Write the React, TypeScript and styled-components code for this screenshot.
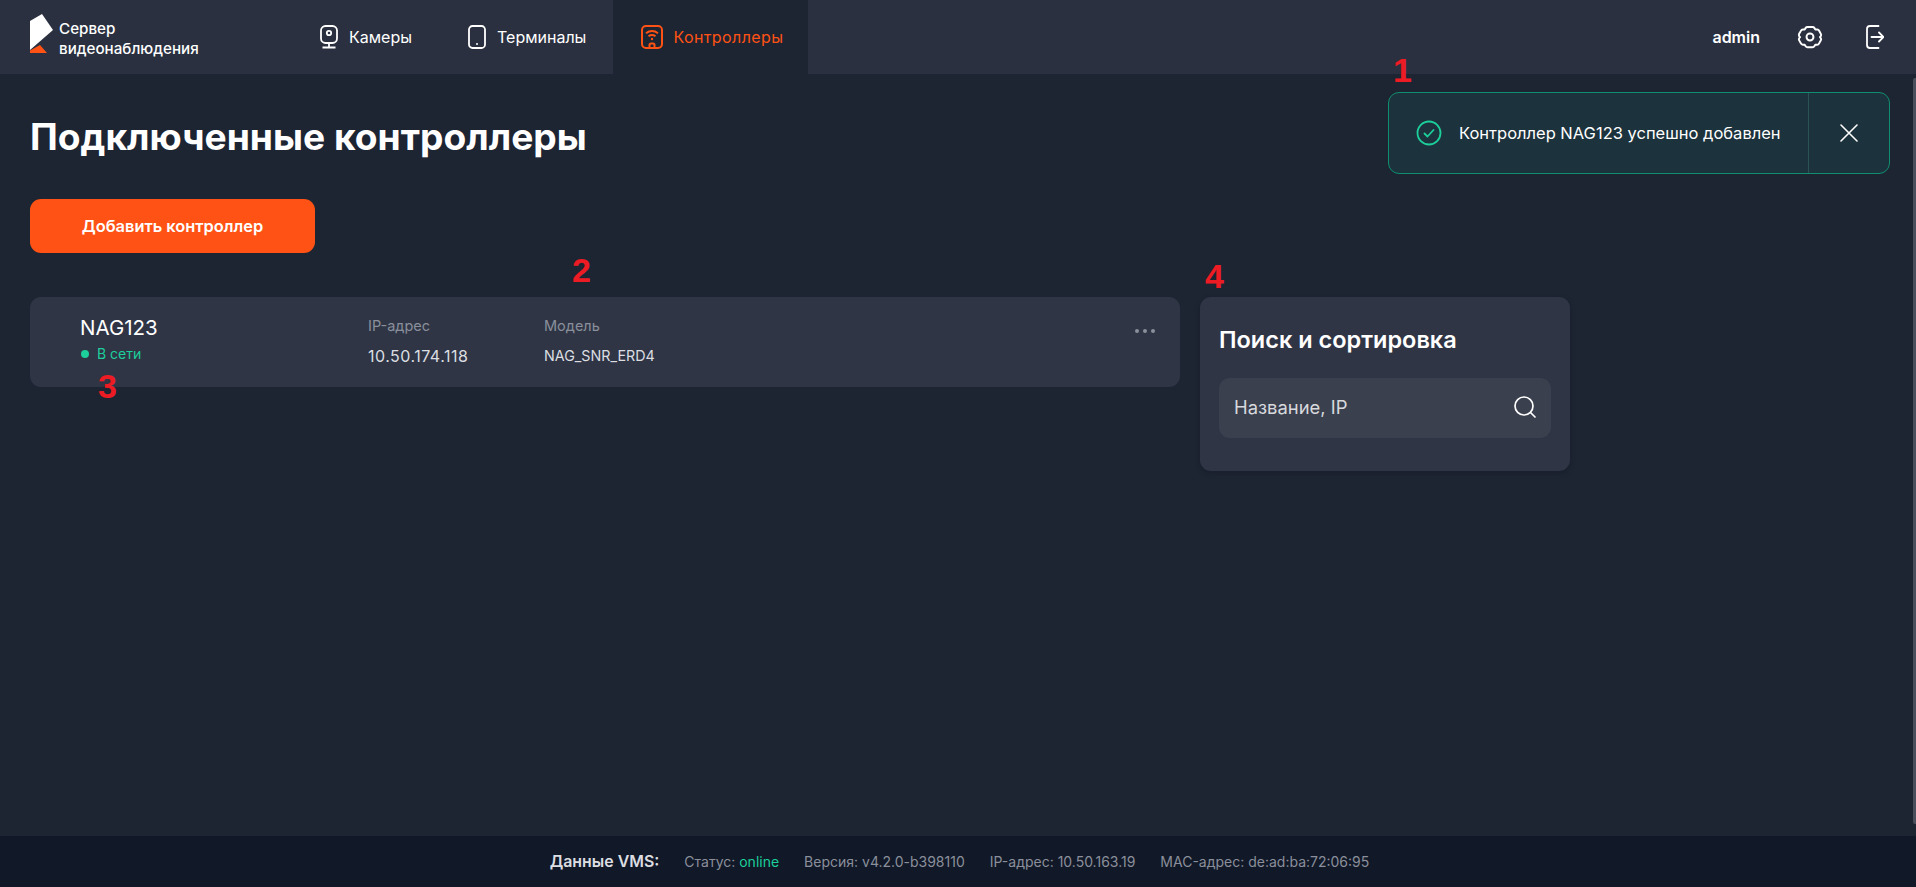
import React from 'react';
import styled, { createGlobalStyle } from 'styled-components';

const ORANGE = '#ff5214';
const GREEN = '#1ccf9b';
const PAGE_BG = '#1d2432';

const GlobalStyle = createGlobalStyle`
    * {
        box-sizing: border-box;
    }
    html,
    body {
        margin: 0;
        padding: 0;
        height: 100%;
        overflow: hidden;
        background: ${PAGE_BG};
        font-family: Inter, 'Noto Sans', sans-serif;
    }
`;

const NAV_ITEMS = [
    { label: 'Камеры', icon: <CameraIcon />, active: false },
    { label: 'Терминалы', icon: <TerminalIcon />, active: false },
    { label: 'Контроллеры', icon: <ControllerIcon />, active: true },
];

function CameraIcon() {
    return (
        <svg width="22" height="26" viewBox="0 0 22 26" fill="none" stroke="currentColor" strokeWidth="1.8">
            <rect x="3" y="2" width="16" height="17" rx="4.5" />
            <circle cx="11" cy="9" r="2.2" />
            <path d="M11 19v4M4.5 23.5h13" />
        </svg>
    );
}

function TerminalIcon() {
    return (
        <svg width="22" height="26" viewBox="0 0 22 26" fill="none" stroke="currentColor" strokeWidth="1.8">
            <rect x="3" y="2" width="16" height="22" rx="3.5" />
            <circle cx="11" cy="20" r="1" fill="currentColor" stroke="none" />
        </svg>
    );
}

function ControllerIcon() {
    return (
        <svg width="24" height="26" viewBox="0 0 24 26" fill="none" stroke="currentColor" strokeWidth="2">
            <rect x="2" y="2" width="20" height="22" rx="4" />
            <path d="M6 9.200c3.600-2.800 8.400-2.800 12 0M8.500 12.300c2.200-1.600 4.800-1.600 7 0" />
            <circle cx="12" cy="15" r="1.200" fill="currentColor" stroke="none" />
            <path d="M9.500 24v-3a1.500 1.500 0 0 1 1.500-1.500h2a1.500 1.500 0 0 1 1.500 1.500v3" />
        </svg>
    );
}

function GearIcon() {
    return (
        <svg width="26" height="26" viewBox="0 0 24 24" fill="none" stroke="currentColor" strokeWidth="1.8" strokeLinejoin="round">
            <circle cx="12" cy="12" r="3.2" />
            <path d="M14.3 2.700a2 2 0 0 1 1.700.9l.9 1.400 1.800.1a2 2 0 0 1 1.600 1l1.700 3a2 2 0 0 1 0 2l-.8 1 .8 1a2 2 0 0 1 0 2l-1.700 3a2 2 0 0 1-1.600 1l-1.800.1-.9 1.400a2 2 0 0 1-1.700.9H9.700a2 2 0 0 1-1.700-.9l-.9-1.400-1.800-.1a2 2 0 0 1-1.600-1l-1.700-3a2 2 0 0 1 0-2l.8-1-.8-1a2 2 0 0 1 0-2l1.700-3a2 2 0 0 1 1.600-1l1.800-.1.900-1.400a2 2 0 0 1 1.700-.9z" />
        </svg>
    );
}

function LogoutIcon() {
    return (
        <svg width="18" height="24" viewBox="0 0 18 24" fill="none" stroke="currentColor" strokeWidth="1.8" strokeLinecap="round" strokeLinejoin="round">
            <path d="M12.500 1H4a3 3 0 0 0-3 3v16a3 3 0 0 0 3 3h8.500" />
            <path d="M5.500 12H17M13 7.500l4.500 4.500-4.500 4.500" />
        </svg>
    );
}

function Logo() {
    return (
        <svg width="24" height="40" viewBox="0 0 24 40">
            <path d="M0 7 12 0l11 16L0 36z" fill="#ffffff" />
            <path d="M0 39v-2.500L10 31l7 8z" fill={ORANGE} />
        </svg>
    );
}

export default function App() {
    return (
        <S_Page>
            <GlobalStyle />
            <S_Header>
                <S_Brand>
                    <Logo />
                    <S_BrandName>
                        Сервер
                        <br />
                        видеонаблюдения
                    </S_BrandName>
                </S_Brand>
                <S_Nav>
                    {NAV_ITEMS.map((item) => (
                        <S_NavItem key={item.label} $active={item.active}>
                            {item.icon}
                            {item.label}
                        </S_NavItem>
                    ))}
                </S_Nav>
                <S_User>
                    <S_UserName>admin</S_UserName>
                    <S_IconButton>
                        <GearIcon />
                    </S_IconButton>
                    <S_IconButton>
                        <LogoutIcon />
                    </S_IconButton>
                </S_User>
            </S_Header>

            <S_Main>
                <S_Title>Подключенные контроллеры</S_Title>
                <S_AddButton>Добавить контроллер</S_AddButton>
                <S_Columns>
                    <S_ControllerCard>
                        <S_Mark $top={-45} $left={542}>
                            2
                        </S_Mark>
                        <S_Mark $top={71} $left={68}>
                            3
                        </S_Mark>
                        <S_NameCol>
                            <S_ControllerName>NAG123</S_ControllerName>
                            <S_Status>В сети</S_Status>
                        </S_NameCol>
                        <S_InfoCol $width={176}>
                            <S_InfoLabel>IP-адрес</S_InfoLabel>
                            <S_IpValue>10.50.174.118</S_IpValue>
                        </S_InfoCol>
                        <S_InfoCol $width={200}>
                            <S_InfoLabel>Модель</S_InfoLabel>
                            <S_InfoValue>NAG_SNR_ERD4</S_InfoValue>
                        </S_InfoCol>
                        <S_MoreDots>
                            <i />
                            <i />
                            <i />
                        </S_MoreDots>
                    </S_ControllerCard>
                    <S_SearchPanel>
                        <S_Mark $top={-39} $left={5}>
                            4
                        </S_Mark>
                        <S_SearchTitle>Поиск и сортировка</S_SearchTitle>
                        <S_SearchBox>
                            Название, IP
                            <svg width="24" height="24" viewBox="0 0 24 24" fill="none" stroke="#ffffff" strokeWidth="1.7" strokeLinecap="round">
                                <circle cx="11" cy="11" r="9" />
                                <path d="M17.500 17.500 22 22" />
                            </svg>
                        </S_SearchBox>
                    </S_SearchPanel>
                </S_Columns>
            </S_Main>

            <S_Footer>
                <S_FooterTitle>Данные VMS:</S_FooterTitle>
                <span>
                    Статус: <S_Online>online</S_Online>
                </span>
                <span>Версия: v4.2.0-b398110</span>
                <span>IP-адрес: 10.50.163.19</span>
                <span>MAC-адрес: de:ad:ba:72:06:95</span>
            </S_Footer>

            <S_Toast>
                <S_Mark $top={-41} $left={4}>
                    1
                </S_Mark>
                <S_ToastBody>
                    <svg width="26" height="26" viewBox="0 0 26 26" fill="none" stroke={GREEN} strokeWidth="1.8" strokeLinecap="round" strokeLinejoin="round">
                        <circle cx="13" cy="13" r="11.500" />
                        <path d="m8.500 13.500 3 3 6-6.500" />
                    </svg>
                    Контроллер NAG123 успешно добавлен
                </S_ToastBody>
                <S_ToastClose>
                    <svg width="20" height="20" viewBox="0 0 20 20" fill="none" stroke="#ffffff" strokeWidth="1.6" strokeLinecap="round">
                        <path d="m2 2 16 16M18 2 2 18" />
                    </svg>
                </S_ToastClose>
            </S_Toast>

            <S_ScrollThumb />
        </S_Page>
    );
}

const S_Page = styled.div`
    position: relative;
    height: 887px;
    display: flex;
    flex-direction: column;
    color: #ffffff;
    background: ${PAGE_BG};
`;

const S_Header = styled.header`
    height: 74px;
    flex: none;
    display: flex;
    align-items: stretch;
    background: #2a303f;
`;

const S_Brand = styled.div`
    width: 289px;
    padding: 14px 0 0 30px;
    display: flex;
    align-items: flex-start;
    gap: 5px;
`;

const S_BrandName = styled.div`
    margin-top: 5px;
    font-size: 15.2px;
    font-weight: 500;
    line-height: 20px;
`;

const S_Nav = styled.nav`
    display: flex;
    align-items: stretch;
`;

const S_NavItem = styled.a<{ $active: boolean }>`
    display: flex;
    align-items: center;
    gap: 9px;
    margin-left: ${(props) => (props.$active ? '2px' : '0')};
    padding: ${(props) => (props.$active ? '0 25px 0 27px' : '0 25px 0 29px')};
    font-size: 16px;
    letter-spacing: ${(props) => (props.$active ? '0.4px' : '0')};
    color: ${(props) => (props.$active ? ORANGE : '#ffffff')};
    background: ${(props) => (props.$active ? PAGE_BG : 'transparent')};
`;

const S_User = styled.div`
    margin-left: auto;
    padding-right: 32px;
    display: flex;
    align-items: center;
`;

const S_UserName = styled.span`
    margin-right: 37px;
    font-size: 16px;
    font-weight: 600;
`;

const S_IconButton = styled.span`
    display: flex;
    & + & {
        margin-left: 43px;
    }
`;

const S_Main = styled.main`
    flex: 1;
    padding: 41px 30px 0;
`;

const S_Title = styled.h1`
    margin: 0;
    font-size: 37.2px;
    font-weight: 700;
    line-height: 44px;
`;

const S_AddButton = styled.button`
    display: block;
    width: 285px;
    height: 54px;
    margin-top: 40px;
    border: none;
    border-radius: 11px;
    font-family: inherit;
    font-size: 16.4px;
    font-weight: 600;
    color: #ffffff;
    background: ${ORANGE};
`;

const S_Columns = styled.div`
    display: flex;
    align-items: flex-start;
    gap: 20px;
    margin-top: 44px;
`;

const S_ControllerCard = styled.section`
    position: relative;
    width: 1150px;
    height: 90px;
    padding: 20px 0 0 50px;
    display: flex;
    border-radius: 11px;
    background: #2f3545;
`;

const S_NameCol = styled.div`
    width: 288px;
`;

const S_ControllerName = styled.div`
    font-size: 20.5px;
    line-height: 22px;
`;

const S_Status = styled.div`
    display: flex;
    align-items: center;
    gap: 8px;
    margin: 6px 0 0 1px;
    font-size: 14px;
    line-height: 18px;
    color: ${GREEN};
    &::before {
        content: '';
        width: 8px;
        height: 8px;
        border-radius: 50%;
        background: ${GREEN};
    }
`;

const S_InfoCol = styled.div<{ $width: number }>`
    width: ${(props) => props.$width}px;
    margin-top: -1px;
`;

const S_InfoLabel = styled.div`
    font-size: 14.5px;
    line-height: 20px;
    color: #8a8f9b;
`;

const S_InfoValue = styled.div`
    margin-top: 10px;
    font-size: 14.3px;
    line-height: 20px;
    color: #dcdee2;
`;

const S_IpValue = styled(S_InfoValue)`
    font-size: 16px;
    letter-spacing: 0.5px;
`;

const S_MoreDots = styled.div`
    margin: 12px 0 0 auto;
    padding-right: 25px;
    display: flex;
    gap: 4px;
    i {
        width: 4px;
        height: 4px;
        border-radius: 50%;
        background: #8a8f9b;
    }
`;

const S_SearchPanel = styled.section`
    position: relative;
    width: 370px;
    height: 174px;
    padding: 28px 19px 0;
    border-radius: 11px;
    background: #2f3545;
    box-shadow: 0 2px 6px #00000026;
`;

const S_SearchTitle = styled.h2`
    margin: 0;
    font-size: 23.5px;
    font-weight: 600;
    line-height: 30px;
`;

const S_SearchBox = styled.div`
    height: 60px;
    margin-top: 23px;
    padding: 0 14px 2px 15px;
    display: flex;
    align-items: center;
    justify-content: space-between;
    border-radius: 11px;
    font-size: 18.4px;
    color: #d7d9dd;
    background: #3b404f;
`;

const S_Footer = styled.footer`
    height: 51px;
    flex: none;
    padding-left: 3px;
    display: flex;
    align-items: center;
    justify-content: center;
    gap: 25px;
    font-size: 14px;
    color: #8a8f9b;
    background: #111827;
`;

const S_FooterTitle = styled.span`
    font-size: 15.9px;
    font-weight: 600;
    color: #dcdee2;
`;

const S_Online = styled.span`
    color: ${GREEN};
`;

const S_Toast = styled.div`
    position: absolute;
    top: 92px;
    left: 1388px;
    width: 502px;
    height: 82px;
    display: flex;
    border: 1px solid #0f8f6f;
    border-radius: 11px;
    background: #1c323c;
`;

const S_ToastBody = styled.div`
    flex: 1;
    padding-left: 27px;
    display: flex;
    align-items: center;
    gap: 17px;
    font-size: 16.5px;
`;

const S_ToastClose = styled.div`
    width: 81px;
    display: flex;
    align-items: center;
    justify-content: center;
    border-left: 1px solid #2b5355;
`;

const S_ScrollThumb = styled.div`
    position: absolute;
    top: 78px;
    right: 0;
    width: 3px;
    height: 746px;
    border-radius: 2px 0 0 2px;
    background: #4a4f5c;
`;

const S_Mark = styled.span<{ $top: number; $left: number }>`
    position: absolute;
    top: ${(props) => props.$top}px;
    left: ${(props) => props.$left}px;
    font-family: 'Liberation Sans', Arial, sans-serif;
    font-size: 34px;
    font-weight: 700;
    line-height: 37px;
    color: #ed1c24;
`;
